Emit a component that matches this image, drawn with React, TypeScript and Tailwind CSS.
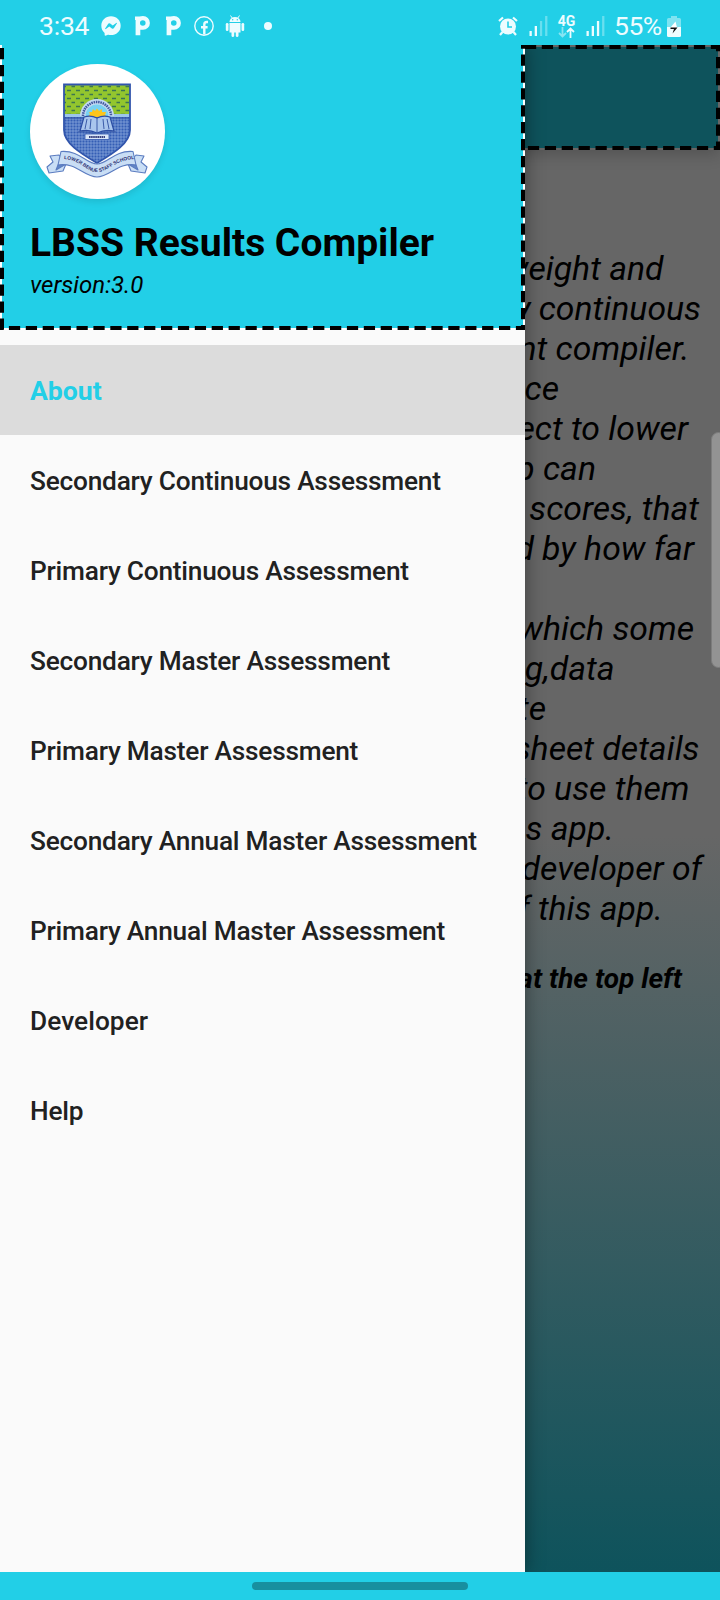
import { FaFacebookMessenger } from "react-icons/fa";

const menu = [
  "About",
  "Secondary Continuous Assessment",
  "Primary Continuous Assessment",
  "Secondary Master Assessment",
  "Primary Master Assessment",
  "Secondary Annual Master Assessment",
  "Primary Annual Master Assessment",
  "Developer",
  "Help",
];

// Each line of the page copy with the x coordinate at which it ends.
const lines: [string, number][] = [
  ["weight and", 663.5],
  ["y continuous", 701],
  ["nt compiler.", 689.5],
  ["ce", 559],
  ["ect to lower", 688],
  ["p can", 596],
  ["scores, that", 699],
  ["d by how far", 694],
  ["", 700],
  ["which some", 694],
  ["g,data", 614.5],
  ["te", 546],
  ["sheet details", 699.5],
  ["to use them", 689.5],
  ["s app.", 614],
  ["developer of", 702],
  ["f this app.", 663],
];

function PIcon() {
  return (
    <svg viewBox="0 0 15 19.500" className="h-[19.5px] w-[15px]">
      <path
        d="M0 .6H4.500Q6 0 8 0A6.900 6.900 0 0 1 8 13.800H5.300V19.300H.6V4H0Z M7.800 4.200A2.800 2.800 0 1 0 7.800 9.800A2.800 2.800 0 1 0 7.800 4.200Z"
        fill="currentColor"
        fillRule="evenodd"
      />
    </svg>
  );
}

function Facebook() {
  return (
    <svg viewBox="0 0 20 20" className="size-5" fill="none" stroke="currentColor">
      <circle cx="10" cy="10" r="9.200" strokeWidth="1.400" />
      <path d="M10.300 18.500V8.500Q10.300 6 12.800 6H14M7 11.200H13.600" strokeWidth="2.400" />
    </svg>
  );
}

function Android() {
  return (
    <svg viewBox="0 0 20 24" className="h-6 w-5" fill="currentColor">
      <path d="M4.500 8A5.500 5 0 0 1 15.500 8Z" />
      <path d="M5.500 1.500L7.500 4.500M14.500 1.500L12.500 4.500" stroke="currentColor" strokeWidth="1" />
      <path d="M4.500 9H15.500V18.500H13.500V22A1.400 1.400 0 0 1 10.800 22V18.500H9.200V22A1.400 1.400 0 0 1 6.500 22V18.500H4.500Z" />
      <rect x="0.800" y="9" width="2.700" height="8" rx="1.300" />
      <rect x="16.500" y="9" width="2.700" height="8" rx="1.300" />
      <circle cx="7.700" cy="5.700" r=".7" fill="#22cfe7" />
      <circle cx="12.300" cy="5.700" r=".7" fill="#22cfe7" />
    </svg>
  );
}

function Alarm() {
  return (
    <svg viewBox="0 0 20 20" className="size-5" fill="none" stroke="currentColor">
      <circle cx="10" cy="10.500" r="8" fill="currentColor" stroke="none" />
      <path d="M1 5L5 1.500M19 5L15 1.500M4.500 16L2 19M15.500 16L18 19" strokeWidth="2.200" />
      <path d="M10 5.500V11H14" stroke="#22cfe7" strokeWidth="1.600" />
    </svg>
  );
}

function Signal({ bars }: { bars: number }) {
  return (
    <svg viewBox="0 0 19 20" className="h-5 w-[19px]" fill="currentColor">
      {[5, 10, 15, 20].map((h, i) => (
        <rect key={h} x={0.5 + i * 5.2} y={20 - h} width="2.300" height={h} opacity={i < bars ? 1 : 0.35} />
      ))}
    </svg>
  );
}

function Battery() {
  return (
    <svg viewBox="0 0 14 21" className="h-[21px] w-[14px]">
      <path d="M4 0H10V2H12.500Q14 2 14 3.500V11H0V3.500Q0 2 1.500 2H4Z" fill="#fff" opacity=".42" />
      <path d="M0 11H14V19.500Q14 21 12.500 21H1.500Q0 21 0 19.500Z" fill="#f0fdff" />
      <path d="M8.500 5.500L3.500 11.500H10Z" fill="#fff" />
      <path d="M3.500 11.500H10.500L5.500 17.500L7 13H3.500Z" fill="#111" />
    </svg>
  );
}

function Crest() {
  return (
    <svg viewBox="0 0 135 135" className="size-[135px]">
      <defs>
        <pattern id="dots" width="9" height="8" patternUnits="userSpaceOnUse">
          <rect width="9" height="8" fill="#93c62e" />
          <path d="M1 2.500H5M5.500 6.500H9" stroke="#3c7650" strokeWidth="1.300" />
        </pattern>
        <pattern id="weave" width="3" height="3" patternUnits="userSpaceOnUse">
          <rect width="3" height="3" fill="#345eb5" />
          <path d="M0 1H3M1 0V3" stroke="#a1b9e8" strokeWidth=".55" />
        </pattern>
        <clipPath id="shield">
          <path d="M34 20.500H100V66C100 79 84 89 67 99C50 89 34 79 34 66Z" />
        </clipPath>
        <path id="ribbonText" d="M34 95C50 95.500 56 108 67 108S86 95.500 105 95" />
      </defs>
      <g clipPath="url(#shield)">
        <rect x="33" y="20" width="68" height="32" fill="url(#dots)" />
        <rect x="33" y="52" width="68" height="50" fill="url(#weave)" />
        <path d="M33 51.500H101" stroke="#9cc5ea" strokeWidth="3" />
        <path d="M33 54H101" stroke="#2c4ea3" strokeWidth="1" />
      </g>
      <path d="M34 20.500H100V66C100 79 84 89 67 99C50 89 34 79 34 66Z" fill="none" stroke="#3155ac" strokeWidth="1.800" />
      <path d="M50 52A17 17 0 0 1 84 52Z" fill="#c3d9f1" />
      <path d="M53 52A14 14 0 0 1 81 52" fill="none" stroke="#40579e" strokeWidth="2.500" strokeDasharray="1.500 .8" />
      <path d="M55.500 52A11.500 11.500 0 0 1 78.500 52Z" fill="#79d2f2" />
      <path d="M58 53L60 50L59 48L62 48L63 45L65 47L67 44.500L69 47L72 45L72 48L76 48L75 51L77 53Z" fill="#fdc51b" />
      <path d="M54 53Q61 51 67 54Q73 51 80 53L84 67Q75 65 67 69Q59 65 50 67Z" fill="#a9c6ed" stroke="#2c4ea3" strokeWidth="1.200" />
      <path d="M67 54V69M57 55L55 65M61 55L60 65M77 55L79 65M73 55L74 65M48 68Q60 67 67 71Q75 67 86 68" fill="none" stroke="#3a5ba8" strokeWidth="1" />
      <rect x="55" y="70" width="24" height="5.500" fill="#d9e6f8" stroke="#3155ac" strokeWidth=".8" />
      <path d="M59 73H75" stroke="#39427e" strokeWidth="1.800" strokeDasharray="1.600 .5" />
      <g fill="#c9def5" stroke="#5b7cc0" strokeWidth="1.100" strokeLinejoin="round">
        <path d="M29 91L20 92L23 98L17 103L19 109L33 107L36 100Z" />
        <path d="M106 91L114 92L111 98L117 103L115 109L101 107L98 100Z" />
        <path d="M28 101L26 106L36 100ZM106 101L108 106L98 100Z" fill="#6187c7" />
        <path d="M31 87.500C50 86 56 100 67 100S84 86 103 87.500L106 101C88 98 80 113 67 113S46 98 28 101Z" />
      </g>
      <text fontSize="4.900" fontWeight="700" fill="#2a2c70" fontFamily="Liberation Sans, sans-serif">
        <textPath href="#ribbonText">LOWER BENUE STAFF SCHOOL</textPath>
      </text>
    </svg>
  );
}

function StatusBar() {
  return (
    <header className="relative z-20 flex h-[45px] items-center bg-[#22cfe7] pt-[7px] text-[#edfcff]">
      <span className="ml-[39px] w-[62px] text-[26.5px] leading-none tracking-[-0.2px]">3:34</span>
      <FaFacebookMessenger className="size-5" />
      <span className="ml-[14px]"><PIcon /></span>
      <span className="ml-4"><PIcon /></span>
      <span className="ml-[13px]"><Facebook /></span>
      <span className="ml-[11px]"><Android /></span>
      <span className="ml-[19px] size-2 rounded-full bg-current" />
      <div className="ml-auto mr-[39px] flex items-center">
        <Alarm />
        <span className="ml-[11px]"><Signal bars={2} /></span>
        <div className="ml-[9px] flex h-[23px] w-[19px] flex-col items-center">
          <span className="text-[14px] leading-[12px] font-bold">4G</span>
          <svg viewBox="0 0 17 11" className="h-[11px] w-[17px]" fill="none" stroke="currentColor" strokeWidth="1.800">
            <path d="M4.500 0V9M1 6L4.500 9.500L8 6" opacity=".5" />
            <path d="M12.500 11V2M9 5L12.500 1.500L16 5" />
          </svg>
        </div>
        <span className="ml-[10px]"><Signal bars={3} /></span>
        <span className="ml-[9px] w-[53px] text-[26.5px] leading-none tracking-[-0.5px]">55%</span>
        <Battery />
      </div>
    </header>
  );
}

function itemStyle(item: string) {
  if (item === "About") return "bg-[#dcdcdc] pt-0.5 text-[26.6px] font-bold text-[#22cfe7]";
  if (item === "Developer") return "pt-1 text-[26.25px] font-medium tracking-[0.05px] text-[#212121]";
  return "pt-1 text-[26.25px] font-medium tracking-[-0.22px] text-[#212121]";
}

export default function App() {
  return (
    <div className="flex h-[1600px] w-[720px] flex-col overflow-hidden bg-[#22cfe7] font-['Roboto',sans-serif]">
      <StatusBar />
      <div className="relative h-[1527px] overflow-hidden">
        <main className="h-full bg-[linear-gradient(180deg,#666_0px,#666_790px,#0e535c_1527px)] text-black">
          <div className="h-[105px] shadow-[0_5px_14px_rgba(0,0,0,0.18)]">
            <svg viewBox="0 0 720 105" className="h-[105px] w-[720px]">
              <rect width="720" height="105" fill="#666" />
              <rect x="2" y="2" width="716" height="101" fill="#0e535c" />
              <g stroke="#000" strokeWidth="4" strokeDasharray="11.25 5.650">
                <path d="M508 2H720M511 103H720M718 -4.900V105" />
              </g>
            </svg>
          </div>
          <div className="pt-[99px]">
            {lines.map(([text, end], i) => (
              <p
                key={i}
                className="h-10 text-right text-[33.75px] leading-10 whitespace-nowrap italic"
                style={{ paddingRight: 720 - end }}
              >
                {text}
              </p>
            ))}
          </div>
          <p className="mt-[33px] pr-[38px] text-right text-[28px] leading-[34px] font-bold italic">at the top left</p>
        </main>
        <div className="absolute top-[387px] right-[-6px] h-[236px] w-[15px] rounded-lg border border-[#7c7c7c] bg-[#939393]" />
        <aside className="absolute inset-y-0 left-0 w-[525px] bg-[#fafafa] shadow-[0_0_18px_rgba(0,0,0,0.4)]">
          <div className="relative h-[285px] border-x-2 border-b-2 border-white bg-[#22cfe7] bg-clip-padding pt-[19px] pl-[28px]">
            <div className="size-[135px] rounded-full bg-white shadow-[0_3px_6px_rgba(0,0,0,0.1)]">
              <Crest />
            </div>
            <h1 className="mt-5 text-[39px] leading-[48px] font-bold">LBSS Results Compiler</h1>
            <p className="text-[24px] leading-9 italic">version:3.0</p>
            <svg viewBox="0 0 525 285" className="absolute top-0 -left-0.5 h-[285px] w-[525px] max-w-none">
              <path d="M0 284H525M1 0V285M524 0V285" stroke="#fff" strokeWidth="2" />
              <g stroke="#000" strokeWidth="4" strokeDasharray="11.25 5.650">
                <path d="M2 3V285M523 -7.400V285M-8 283H525" />
              </g>
            </svg>
          </div>
          <nav className="pt-[15px]">
            {menu.map((item) => (
              <a key={item} className={`flex h-[90px] items-center pl-[30px] ${itemStyle(item)}`}>
                {item}
              </a>
            ))}
          </nav>
        </aside>
      </div>
      <footer className="flex h-7 items-center justify-center bg-[#22cfe7]">
        <div className="h-2 w-[216px] rounded bg-[#188f9f]" />
      </footer>
    </div>
  );
}
